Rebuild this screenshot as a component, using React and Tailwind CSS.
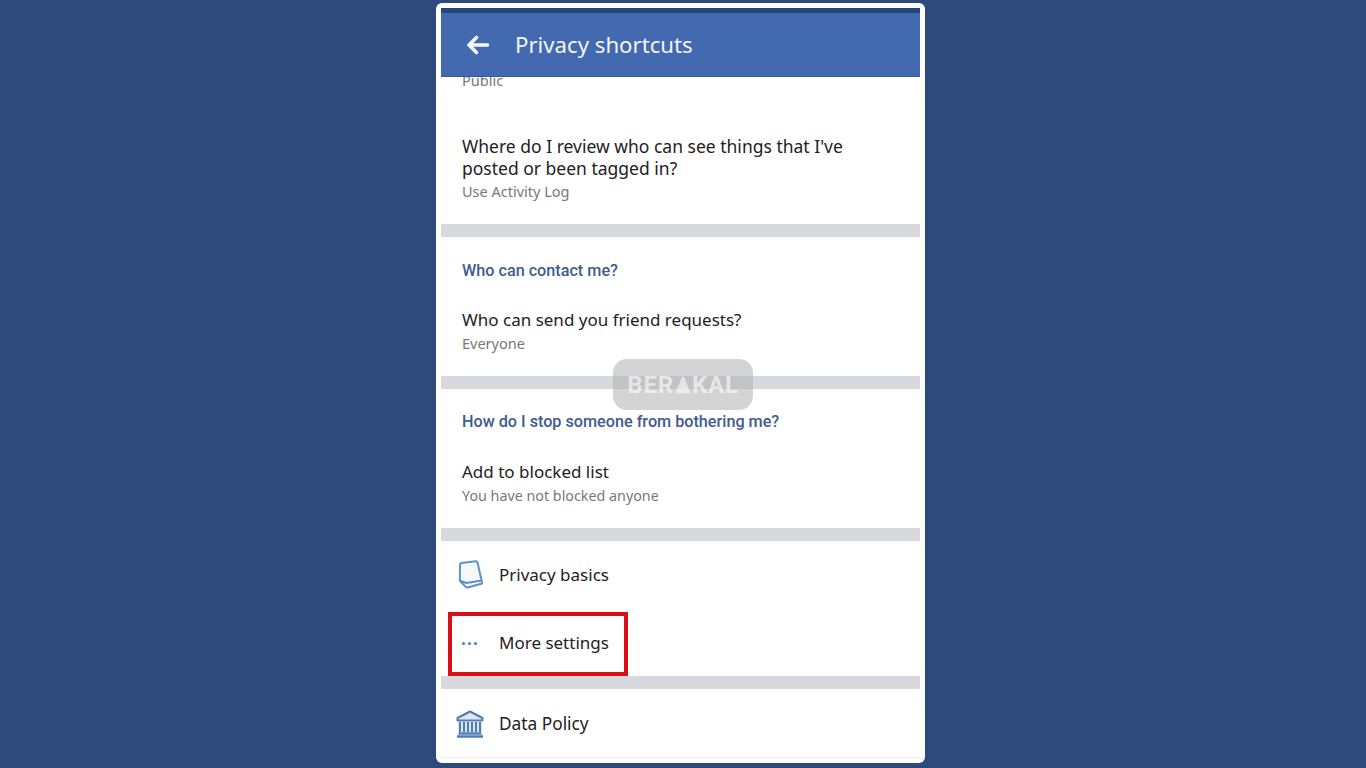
export default function App() {
  return (
    <div className="h-[768px] overflow-hidden bg-[#2e4a7d] pt-[3px] font-['Noto_Sans',sans-serif]">
      <div className="relative ml-[436px] h-[760px] w-[489px] overflow-hidden rounded-[6px] bg-white px-[5px] pt-[5px]">
        {/* status bar + header */}
        <div className="h-[5px] bg-[#26477d]" />
        <div className="flex h-[64px] items-center border-b border-[#3b5a9c] bg-[#4369b0] pl-[25px] text-white">
          <svg width="24" height="20" viewBox="0 0 24 20" fill="none" stroke="#f4f7fc" strokeWidth="3.6" strokeLinecap="round" strokeLinejoin="round">
            <path d="M21.5 10H3M10.5 2.5 3 10l7.5 7.5" />
          </svg>
          <div className="ml-[25px] text-[22.2px] leading-[28px] text-[#f2f5fb]">Privacy shortcuts</div>
        </div>

        {/* first section, scrolled under the header */}
        <div className="h-[147px] overflow-hidden pl-[21px]">
          <div className="-mt-[8px] text-[14.5px] leading-[22px] text-[#77787c]">Public</div>
          <div className="mt-[44px] text-[17.5px] leading-[22px] whitespace-nowrap text-[#1f2023]">
            Where do I review who can see things that I've
            <br />
            posted or been tagged in?
          </div>
          <div className="mt-[1px] text-[14.5px] leading-[22px] text-[#77787c]">Use Activity Log</div>
        </div>
        <div className="h-[13px] bg-[#d8d9de]" />

        <div className="h-[139px] pl-[21px]">
          <div className="pt-[24px] font-['Roboto',sans-serif] text-[16.2px] font-medium leading-[20px] text-[#3f5b8f]">Who can contact me?</div>
          <div className="mt-[28px] text-[17px] leading-[22px] text-[#1f2023]">Who can send you friend requests?</div>
          <div className="mt-[1px] text-[14.5px] leading-[22px] text-[#77787c]">Everyone</div>
        </div>
        <div className="h-[13px] bg-[#d8d9de]" />

        <div className="h-[139px] pl-[21px]">
          <div className="pt-[23px] font-['Roboto',sans-serif] text-[16.2px] font-medium leading-[20px] text-[#3f5b8f]">How do I stop someone from bothering me?</div>
          <div className="mt-[29px] text-[17px] leading-[22px] text-[#1f2023]">Add to blocked list</div>
          <div className="mt-[2px] text-[14.3px] leading-[22px] text-[#77787c]">You have not blocked anyone</div>
        </div>
        <div className="h-[13px] bg-[#d8d9de]" />

        {/* link rows */}
        <div className="flex h-[71px] items-center pb-[4px] pl-[17px]">
          <div className="flex w-[41px] shrink-0">
            <svg width="25" height="29" viewBox="0 0 25 29" fill="none" stroke="#5f92c8" strokeWidth="2" strokeLinejoin="round">
              <path d="M3.500 3 17.500 1.200q1.500-.2 2 1.300L24 22.500q.3 1-.7 1.300L9.500 27.500q-1 .2-1.800-.6L2.500 21.500q-.6-.6-.6-1.500L2 4.500Q2 3.200 3.500 3z" fill="#f6f9fc" />
              <path d="M2.500 21l6 2 15-2.500" />
            </svg>
          </div>
          <div className="text-[17px] leading-[22px] text-[#1f2023]">Privacy basics</div>
        </div>

        <div className="ml-[7px] flex h-[64px] w-[180px] items-center border-[4px] border-[#d90f17] pb-[2px] pl-[10px]">
          <div className="flex w-[37px] shrink-0 gap-[3px]">
            <span className="size-[3px] rounded-full bg-[#4f7fbe]" />
            <span className="size-[3px] rounded-full bg-[#4f7fbe]" />
            <span className="size-[3px] rounded-full bg-[#4f7fbe]" />
          </div>
          <div className="text-[17px] leading-[22px] whitespace-nowrap text-[#1f2023]">More settings</div>
        </div>
        <div className="h-[13px] bg-[#d8d9de]" />

        <div className="flex h-[69px] items-center border-b border-[#f3f0e4] pt-[2px] pl-[15px]">
          <div className="flex w-[43px] shrink-0">
            <svg width="28" height="28" viewBox="0 0 28 28" fill="none" stroke="#4f7cb5" strokeWidth="2">
              <path d="M14 1.500 26.500 8v2.500h-25V8z" fill="#dce8f4" strokeLinejoin="round" />
              <path d="M4 12v10M8 12v10M12 12v10M16 12v10M20 12v10M24 12v10" strokeWidth="2.400" />
              <path d="M2.500 23.500h23M1 26.500h26" strokeWidth="2.400" />
            </svg>
          </div>
          <div className="text-[17.3px] leading-[22px] text-[#1f2023]">Data Policy</div>
        </div>

        {/* watermark */}
        <div className="absolute left-[177px] top-[356px] flex h-[51px] w-[140px] items-center justify-center rounded-[14px] bg-[#b0b0b0]/55 font-['Roboto',sans-serif] text-[24px] font-bold tracking-[0.8px] text-white/60">
          BER
          <svg width="16" height="20" viewBox="0 0 16 20" className="mx-[1px]" fill="#ffffff" fillOpacity="0.55">
            <path d="M8 1.500q1 0 1.500 1.500L15 17q.4 1.500-1 1.500H2Q.6 18.500 1 17L6.500 3Q7 1.500 8 1.500z" />
          </svg>
          KAL
        </div>
      </div>
    </div>
  );
}
